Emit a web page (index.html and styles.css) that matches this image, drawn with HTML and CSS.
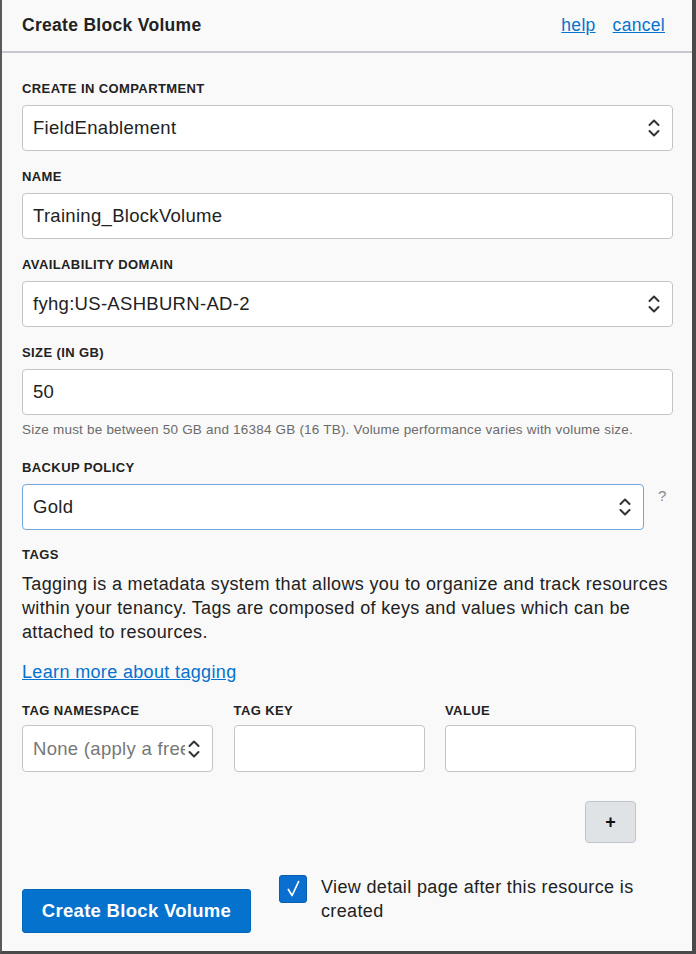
FILE: index.html
```html
<!DOCTYPE html>
<html>
<head>
<meta charset="utf-8">
<link rel="stylesheet" href="styles.css">
</head>
<body>
<div class="panel">
  <div class="header">
    <div class="title">Create Block Volume</div>
    <div class="links"><a href="#">help</a><a href="#">cancel</a></div>
  </div>
  <div class="content">
    <div class="field">
      <div class="label">CREATE IN COMPARTMENT</div>
      <div class="input select"><span>FieldEnablement</span>
        <svg class="arrows" width="12" height="18" viewBox="0 0 12 18"><path d="M1.5 6 L6 1.5 L10.5 6 M1.5 12 L6 16.5 L10.5 12" fill="none" stroke="#333" stroke-width="2" stroke-linecap="round" stroke-linejoin="round"/></svg>
      </div>
    </div>
    <div class="field">
      <div class="label">NAME</div>
      <div class="input"><span>Training_BlockVolume</span></div>
    </div>
    <div class="field">
      <div class="label">AVAILABILITY DOMAIN</div>
      <div class="input select"><span>fyhg:US-ASHBURN-AD-2</span>
        <svg class="arrows" width="12" height="18" viewBox="0 0 12 18"><path d="M1.5 6 L6 1.5 L10.5 6 M1.5 12 L6 16.5 L10.5 12" fill="none" stroke="#333" stroke-width="2" stroke-linecap="round" stroke-linejoin="round"/></svg>
      </div>
    </div>
    <div class="field size">
      <div class="label">SIZE (IN GB)</div>
      <div class="input"><span>50</span></div>
      <div class="hint">Size must be between 50 GB and 16384 GB (16 TB). Volume performance varies with volume size.</div>
    </div>
    <div class="field backup">
      <div class="label">BACKUP POLICY</div>
      <div class="row-help">
        <div class="input select focused"><span>Gold</span>
          <svg class="arrows" width="12" height="18" viewBox="0 0 12 18"><path d="M1.5 6 L6 1.5 L10.5 6 M1.5 12 L6 16.5 L10.5 12" fill="none" stroke="#333" stroke-width="2" stroke-linecap="round" stroke-linejoin="round"/></svg>
        </div>
        <span class="qmark">?</span>
      </div>
    </div>
    <div class="tags">
      <div class="label">TAGS</div>
      <p class="desc">Tagging is a metadata system that allows you to organize and track resources within your tenancy. Tags are composed of keys and values which can be attached to resources.</p>
      <a href="#" class="learn">Learn more about tagging</a>
    </div>
    <div class="tag-grid">
      <div class="tag-col">
        <div class="label">TAG NAMESPACE</div>
        <div class="input select small"><span class="placeholder">None (apply a free</span>
          <svg class="arrows" width="12" height="18" viewBox="0 0 12 18"><path d="M1.5 6 L6 1.5 L10.5 6 M1.5 12 L6 16.5 L10.5 12" fill="none" stroke="#333" stroke-width="2" stroke-linecap="round" stroke-linejoin="round"/></svg>
        </div>
      </div>
      <div class="tag-col">
        <div class="label">TAG KEY</div>
        <div class="input small"></div>
      </div>
      <div class="tag-col">
        <div class="label">VALUE</div>
        <div class="input small"></div>
      </div>
    </div>
    <div class="plus-row"><button class="plus">+</button></div>
    <div class="footer">
      <button class="primary">Create Block Volume</button>
      <div class="check">
        <span class="box"><svg width="28" height="28" viewBox="0 0 28 28"><path d="M9 14.5 L13 21 L20 6" fill="none" stroke="#fff" stroke-width="1.8" stroke-linecap="round" stroke-linejoin="round"/></svg></span>
        <span class="check-text">View detail page after this resource is created</span>
      </div>
    </div>
  </div>
</div>
</body>
</html>
```
FILE: styles.css
```css
html, body {
  margin: 0;
  padding: 0;
}
body {
  font-family: "Liberation Sans", Arial, sans-serif;
  color: #222;
  background: #f9f9f9;
}
.panel {
  box-sizing: border-box;
  width: 696px;
  height: 954px;
  background: #f9f9f9;
  border-left: 2px solid #5a5a5a;
  border-right: 4px solid #4a4a4a;
  border-bottom: 3px solid #4a4a4a;
  overflow: hidden;
}
.header {
  height: 51px;
  border-bottom: 2px solid #c5c8cc;
  display: flex;
  align-items: center;
  justify-content: space-between;
  padding: 0 27px 0 20px;
}
.title {
  font-size: 17.5px;
  font-weight: bold;
  color: #222;
  letter-spacing: 0.3px;
}
.links {
  display: flex;
  gap: 17px;
}
.links a {
  color: #0572ce;
  font-size: 17.5px;
  letter-spacing: 0.3px;
  text-decoration: underline;
}
.content {
  padding: 28px 19px 0 20px;
}
.field {
  margin-bottom: 18px;
}
.label {
  font-size: 13px;
  line-height: 16px;
  font-weight: bold;
  color: #222;
  margin-bottom: 8px;
  letter-spacing: 0.4px;
}
.input {
  box-sizing: border-box;
  height: 46px;
  background: #fff;
  border: 1px solid #c1c5ca;
  border-radius: 4px;
  display: flex;
  align-items: center;
  justify-content: space-between;
  padding: 0 12px 0 10px;
  font-size: 18.5px;
  letter-spacing: 0.3px;
  color: #222;
}
.input.focused {
  border-color: #73a6dc;
}
.arrows {
  flex: none;
}
.hint {
  font-size: 13.5px;
  letter-spacing: 0.2px;
  color: #6b6b6b;
  margin-top: 7px;
}
.field.size {
  margin-bottom: 23px;
}
.row-help {
  display: flex;
  align-items: flex-start;
}
.row-help .input {
  width: 622px;
}
.qmark {
  margin-left: 14px;
  margin-top: 3px;
  font-size: 15px;
  color: #888;
}
.field.backup {
  margin-bottom: 17px;
}
.tags .label {
  margin-bottom: 9px;
}
.desc {
  margin: 0;
  font-size: 18px;
  line-height: 24px;
  letter-spacing: 0.35px;
  color: #222;
}
.learn {
  display: inline-block;
  margin-top: 18px;
  font-size: 18px;
  letter-spacing: 0.35px;
  color: #0572ce;
  text-decoration: underline;
}
.tag-grid {
  display: flex;
  gap: 20.5px;
  margin-top: 20px;
}
.tag-col {
  width: 191px;
}
.tag-col .label {
  margin-bottom: 6px;
}
.input.small {
  height: 47px;
}
.placeholder {
  color: #777;
  white-space: nowrap;
  overflow: hidden;
  width: 152px;
}
.plus-row {
  display: flex;
  justify-content: flex-end;
  padding-right: 37px;
  margin-top: 29px;
}
.plus {
  box-sizing: border-box;
  width: 51px;
  height: 42px;
  background: #e0e3e5;
  border: 1px solid #c1c5ca;
  border-radius: 4px;
  font-family: "Liberation Sans", Arial, sans-serif;
  font-size: 18px;
  font-weight: bold;
  color: #111;
  padding: 0;
}
.footer {
  display: flex;
  align-items: flex-start;
  margin-top: 32px;
}
.primary {
  margin-top: 14px;
  box-sizing: border-box;
  width: 229px;
  height: 44px;
  background: #0572ce;
  border: 1px solid #0466b8;
  border-radius: 3px;
  color: #fff;
  font-family: "Liberation Sans", Arial, sans-serif;
  font-size: 18.5px;
  letter-spacing: 0.3px;
  font-weight: bold;
  padding: 0;
}
.check {
  display: flex;
  align-items: flex-start;
  margin-left: 28px;
}
.box {
  width: 28px;
  height: 28px;
  background: #0a6fcf;
  border-radius: 3px;
  border: 1px solid #0a5db0;
  box-sizing: border-box;
  display: flex;
  align-items: center;
  justify-content: center;
  flex: none;
}
.box svg {
  display: block;
}
.check-text {
  margin-left: 14px;
  width: 340px;
  font-size: 18px;
  line-height: 24px;
  letter-spacing: 0.35px;
  color: #222;
}
```
